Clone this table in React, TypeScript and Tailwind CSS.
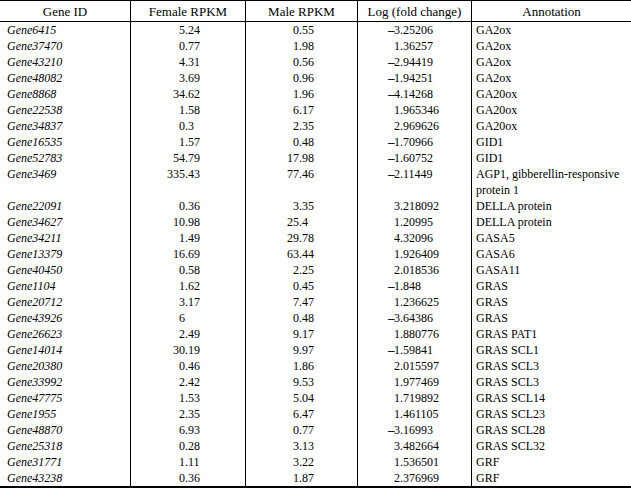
import React from "react";

type Row = [string, string, string, string, string[]];

const rows: Row[] = [
  ["Gene6415", "5.24", "0.55", "-3.25206", ["GA2ox"]],
  ["Gene37470", "0.77", "1.98", "1.36257", ["GA2ox"]],
  ["Gene43210", "4.31", "0.56", "-2.94419", ["GA2ox"]],
  ["Gene48082", "3.69", "0.96", "-1.94251", ["GA2ox"]],
  ["Gene8868", "34.62", "1.96", "-4.14268", ["GA20ox"]],
  ["Gene22538", "1.58", "6.17", "1.965346", ["GA20ox"]],
  ["Gene34837", "0.3", "2.35", "2.969626", ["GA20ox"]],
  ["Gene16535", "1.57", "0.48", "-1.70966", ["GID1"]],
  ["Gene52783", "54.79", "17.98", "-1.60752", ["GID1"]],
  ["Gene3469", "335.43", "77.46", "-2.11449", ["AGP1, gibberellin-responsive", "protein 1"]],
  ["Gene22091", "0.36", "3.35", "3.218092", ["DELLA protein"]],
  ["Gene34627", "10.98", "25.4", "1.20995", ["DELLA protein"]],
  ["Gene34211", "1.49", "29.78", "4.32096", ["GASA5"]],
  ["Gene13379", "16.69", "63.44", "1.926409", ["GASA6"]],
  ["Gene40450", "0.58", "2.25", "2.018536", ["GASA11"]],
  ["Gene1104", "1.62", "0.45", "-1.848", ["GRAS"]],
  ["Gene20712", "3.17", "7.47", "1.236625", ["GRAS"]],
  ["Gene43926", "6", "0.48", "-3.64386", ["GRAS"]],
  ["Gene26623", "2.49", "9.17", "1.880776", ["GRAS PAT1"]],
  ["Gene14014", "30.19", "9.97", "-1.59841", ["GRAS SCL1"]],
  ["Gene20380", "0.46", "1.86", "2.015597", ["GRAS SCL3"]],
  ["Gene33992", "2.42", "9.53", "1.977469", ["GRAS SCL3"]],
  ["Gene47775", "1.53", "5.04", "1.719892", ["GRAS SCL14"]],
  ["Gene1955", "2.35", "6.47", "1.461105", ["GRAS SCL23"]],
  ["Gene48870", "6.93", "0.77", "-3.16993", ["GRAS SCL28"]],
  ["Gene25318", "0.28", "3.13", "3.482664", ["GRAS SCL32"]],
  ["Gene31771", "1.11", "3.22", "1.536501", ["GRF"]],
  ["Gene43238", "0.36", "1.87", "2.376969", ["GRF"]],
];

function Dec({ v }: { v: string }) {
  const i = v.indexOf(".");
  const int = i >= 0 ? v.slice(0, i) : v;
  const frac = i >= 0 ? v.slice(i) : "";
  return (
    <span className="flex">
      <span className="w-[18px] text-right">{int}</span>
      <span>{frac}</span>
    </span>
  );
}

function LogVal({ v }: { v: string }) {
  const neg = v.startsWith("-");
  const n = neg ? v.slice(1) : v;
  return (
    <span className="flex">
      <span className="w-[8px] text-right font-black text-[13px] leading-[16px] tracking-[-0.5px]">
        {neg ? "\u2013" : ""}
      </span>
      <span>{n}</span>
    </span>
  );
}

const grid = "grid grid-cols-[130px_115px_112px_114px_160px]";

export default function App() {
  return (
    <div
      className="w-[631px] bg-white text-black"
      style={{ fontFamily: '"Liberation Serif", "Times New Roman", serif' }}
    >
      <div className="border-t border-b-2 border-black">
        <div className={`${grid} h-[21px] border-b border-black text-[13px] leading-[20px]`}>
          <div className="text-center pt-[1px]">Gene ID</div>
          <div className="border-l border-black text-center pt-[1px]">Female RPKM</div>
          <div className="border-l border-black text-center pt-[1px]">Male RPKM</div>
          <div className="border-l border-black text-center pt-[1px]">Log (fold change)</div>
          <div className="border-l border-black text-center pt-[1px]">Annotation</div>
        </div>
        {rows.map((r, idx) => (
          <div key={idx} className={`${grid} text-[12px] leading-[16px]`}>
            <div className="pl-[7px] italic">{r[0]}</div>
            <div className="border-l border-black pl-[36px]">
              <Dec v={r[1]} />
            </div>
            <div className="border-l border-black pl-[35px]">
              <Dec v={r[2]} />
            </div>
            <div className="border-l border-black pl-[28px]">
              <LogVal v={r[3]} />
            </div>
            <div className="border-l border-black pl-[4px]">
              {r[4].map((t, k) => (
                <div key={k}>{t}</div>
              ))}
            </div>
          </div>
        ))}
      </div>
    </div>
  );
}
